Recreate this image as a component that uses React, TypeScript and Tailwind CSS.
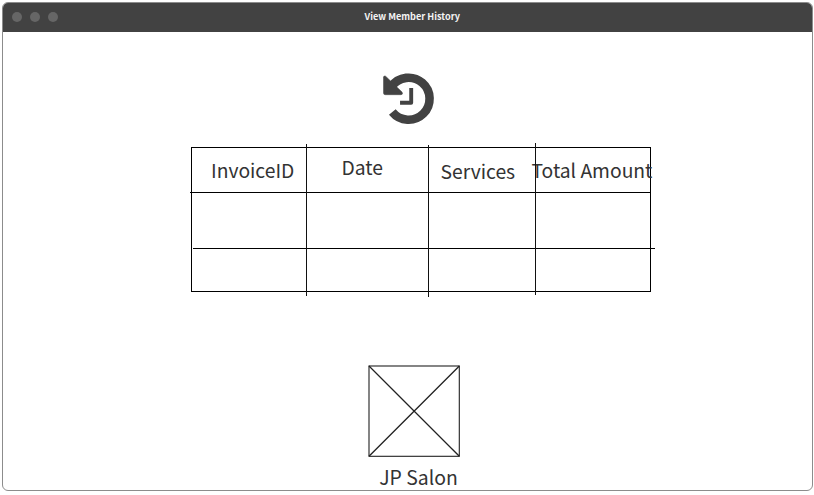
const headers = [
  { label: 'InvoiceID', style: 'pl-[19px] pt-[7px]' },
  { label: 'Date', style: 'pl-[34.5px] pt-[4px]' },
  { label: 'Services', style: 'pl-[11.5px] pt-[8px]' },
  { label: 'Total Amount', style: '-ml-[4.5px] pt-[7px]' },
];

function TitleBar() {
  return (
    <header className="relative flex h-[29px] shrink-0 items-center bg-[#424242] pl-[9px]">
      <div className="flex gap-[8px] pb-[2px]">
        <span className="size-[10px] rounded-full bg-[#666]" />
        <span className="size-[10px] rounded-full bg-[#666]" />
        <span className="size-[10px] rounded-full bg-[#666]" />
      </div>
      <h1 className="absolute left-[361.6px] top-[6px] whitespace-nowrap text-[9.15px] leading-[14px] font-bold text-[#f4f4f4]">
        View Member History
      </h1>
    </header>
  );
}

function HistoryIcon() {
  return (
    <svg className="ml-[379px] mt-[40px] block size-[54px] shrink-0" viewBox="382 72 54 54" fill="none">
      <path d="M391.5 86.5A21 21 0 1 1 392.3 112" stroke="#424242" strokeWidth="8.6" />
      <path
        d="M385.6 76.2L402 92Q403.4 94.5 401 94.7H385.2Q383.5 94.7 383.5 93V77.3Q383.7 75.2 385.6 76.2Z"
        fill="#424242"
        stroke="#424242"
        strokeWidth="0.5"
      />
      <path d="M411.2 90V102.8H402" stroke="#424242" strokeWidth="3.9" strokeLinecap="square" strokeLinejoin="round" />
    </svg>
  );
}

function HistoryTable() {
  return (
    <section className="relative ml-[188px] mt-[21px] h-[145px] w-[460px] shrink-0 border border-black">
      <div className="grid grid-cols-[115px_122px_107px_114px] text-[19.3px] leading-[30px] text-[#333]">
        {headers.map((h) => (
          <div key={h.label} className={`h-[44px] whitespace-nowrap ${h.style}`}>
            {h.label}
          </div>
        ))}
      </div>
      <i className="absolute -left-[2px] top-[44px] h-px w-[461px] bg-black" />
      <i className="absolute left-[1px] top-[100px] h-px w-[462px] bg-black" />
      <i className="absolute left-[114px] -top-[4px] h-[152px] w-px bg-[#111]" />
      <i className="absolute left-[236px] -top-[3px] h-[152px] w-px bg-[#111]" />
      <i className="absolute left-[343px] -top-[5px] h-[152px] w-px bg-[#111]" />
    </section>
  );
}

function Logo() {
  return (
    <footer className="ml-[365px] mt-[73px] w-[102px] shrink-0 text-[19.4px] text-[#333]">
      <svg className="block h-[93px] w-[93px]" viewBox="368 365 93 93" fill="none" stroke="#222">
        <rect x="369" y="366" width="90.3" height="90.3" strokeWidth="1.1" />
        <path d="M369 366L459.3 456.3M459.3 366L369 456.3" strokeWidth="1.3" />
      </svg>
      <p className="-ml-px w-[103px] pt-[4px] text-center leading-[30px]">JP Salon</p>
    </footer>
  );
}

export default function App() {
  return (
    <div className="h-[495px] w-[814px] overflow-hidden bg-white pl-[2px] pt-[2px] font-['Noto_Sans_CJK_SC',sans-serif]">
      <main className="flex h-[489px] w-[811px] flex-col overflow-hidden rounded-[6px] border border-[#8c8c8c] bg-white">
        <TitleBar />
        <HistoryIcon />
        <HistoryTable />
        <Logo />
      </main>
    </div>
  );
}
